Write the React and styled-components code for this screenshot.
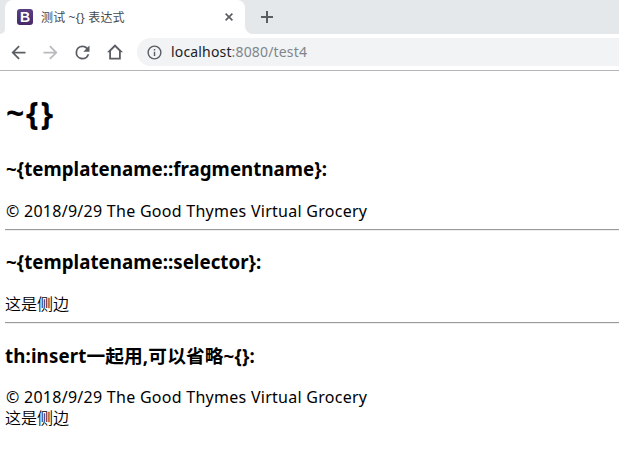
import React from "react";
import styled, { createGlobalStyle } from "styled-components";

const GlobalStyle = createGlobalStyle`
  * { box-sizing: border-box; }
  body {
    margin: 0;
    background: #fff;
    color: #000;
    overflow: hidden;
    font-family: "Noto Sans", "Noto Sans CJK SC", sans-serif;
  }
`;

const Window = styled.div`
  width: 619px;
  height: 455px;
  overflow: hidden;
  background: #fff;
`;

const TabStrip = styled.div`
  display: flex;
  height: 34px;
  background: #fff;
`;

const StripStart = styled.div`
  width: 5px;
  background: #e5e8eb;
  border-bottom-right-radius: 5px;
`;

const TabHolder = styled.div`
  width: 240px;
  background: linear-gradient(#e5e8eb 50%, #fff 50%);
`;

const Tab = styled.div`
  display: flex;
  align-items: center;
  height: 34px;
  padding-left: 12px;
  background: #fff;
  border-radius: 8px 8px 0 0;
`;

const StripRest = styled.div`
  flex: 1;
  padding: 11px 0 0 16px;
  background: #e5e8eb;
  border-bottom-left-radius: 8px;
`;

const TabTitle = styled.div`
  width: 184px;
  margin-left: 8px;
  padding-top: 1px;
  color: #45494d;
  font-size: 12px;
  line-height: 16px;
  letter-spacing: 0.15px;
  white-space: nowrap;
`;

const Icon = styled.svg`
  display: block;
  flex: none;
  width: ${(p) => p.$size}px;
  height: ${(p) => p.$size}px;
  fill: ${(p) => p.$color || "#5a5e63"};
`;

const Toolbar = styled.div`
  display: flex;
  align-items: center;
  height: 37px;
  padding-left: 3px;
  border-bottom: 1px solid #b4b5b7;
`;

const NavButton = styled.div`
  display: flex;
  justify-content: center;
  width: 32px;
  padding-right: ${(p) => (p.$nudge ? "1px" : "0")};
`;

const AddressBar = styled.div`
  display: flex;
  align-items: center;
  flex: 1;
  height: 28px;
  margin-left: 6px;
  padding-left: 9px;
  border-radius: 14px 0 0 14px;
  background: #f1f3f4;
`;

const Address = styled.div`
  margin-left: 8px;
  color: #202124;
  font-size: 14px;
  line-height: 20px;
  letter-spacing: 0.16px;
  white-space: nowrap;
`;

const Muted = styled.span`
  color: #80868b;
`;

const Page = styled.main`
  padding-left: 5px;
  padding-top: 21px;
`;

const Title = styled.h1`
  margin: 0 0 22px;
  padding-left: 1px;
  font-size: 32px;
  font-weight: 700;
  line-height: 42px;
  letter-spacing: 1.8px;
`;

const Heading = styled.h3`
  margin: 0 0 20px;
  padding-left: ${(p) => (p.$inset ? "1px" : "0")};
  padding-top: ${(p) => (p.$mixed ? "1px" : "0")};
  height: 25px;
  font-size: 18.7px;
  font-weight: 700;
  line-height: 25px;
  white-space: nowrap;
  letter-spacing: ${(p) => (p.$mixed ? "0.13px" : "0.04px")};
`;

const Line = styled.div`
  height: 21px;
  font-size: 16px;
  font-weight: 350;
  line-height: 21px;
  white-space: nowrap;
`;

const LatinLine = styled(Line)`
  padding-left: 1px;
  font-weight: 400;
  letter-spacing: 0.27px;
`;

const Rule = styled.hr`
  height: 2px;
  margin: 7px 0 18px;
  border: 0;
  border-top: 1px solid #9a9a9a;
  border-bottom: 1px solid #eee;
`;

const Notice = () => <LatinLine>© 2018/9/29 The Good Thymes Virtual Grocery</LatinLine>;
const Sidebar = () => <Line>这是侧边</Line>;

const Favicon = styled.div`
  width: 16px;
  height: 16px;
  border-radius: 3px;
  background: linear-gradient(#5b3f86, #452967);
  color: #fff;
  font: 700 14px/16px "Liberation Sans", sans-serif;
  text-align: center;
`;

export default function App() {
  return (
    <Window>
      <GlobalStyle />
      <TabStrip>
        <StripStart />
        <TabHolder>
          <Tab>
            <Favicon>B</Favicon>
            <TabTitle>测试 ~{"{}"} 表达式</TabTitle>
            <Icon $size={8} viewBox="0 0 8 8">
              <path d="M0.6 0.6L7.4 7.4M7.4 0.6L0.6 7.4" stroke="#5a5e63" strokeWidth="1.6" />
            </Icon>
          </Tab>
        </TabHolder>
        <StripRest>
          <Icon $size={12} viewBox="0 0 12 12">
            <path d="M5 0h2v5h5v2H7v5H5V7H0V5h5z" />
          </Icon>
        </StripRest>
      </TabStrip>
      <Toolbar>
        <NavButton $nudge>
          <Icon $size={21} viewBox="0 0 24 24">
            <path d="M20 11H7.83l5.59-5.59L12 4l-8 8 8 8 1.41-1.41L7.83 13H20v-2z" />
          </Icon>
        </NavButton>
        <NavButton $nudge>
          <Icon $size={21} $color="#b8babc" viewBox="0 0 24 24">
            <path d="M4 11h12.17l-5.59-5.59L12 4l8 8-8 8-1.41-1.41L16.17 13H4v-2z" />
          </Icon>
        </NavButton>
        <NavButton $nudge>
          <Icon $size={21} viewBox="0 0 24 24">
            <path d="M17.65 6.35A7.96 7.96 0 0 0 12 4a8 8 0 1 0 7.73 10h-2.08A6 6 0 1 1 12 6c1.66 0 3.14.69 4.22 1.78L13 11h7V4l-2.35 2.35z" />
          </Icon>
        </NavButton>
        <NavButton>
          <Icon $size={16} viewBox="0 0 16 16">
            <path d="M8 0.3L0 8.3h2.2V15.5h11.6V8.3H16zM8 3l4 3.9v6.8H4V6.9z" fillRule="evenodd" />
          </Icon>
        </NavButton>
        <AddressBar>
          <Icon $size={17} viewBox="0 0 24 24">
            <path d="M11 7h2v2h-2zm0 4h2v6h-2zm1-9a10 10 0 1 0 0 20 10 10 0 0 0 0-20zm0 18a8 8 0 1 1 0-16 8 8 0 0 1 0 16z" />
          </Icon>
          <Address>
            localhost<Muted>:8080/test4</Muted>
          </Address>
        </AddressBar>
      </Toolbar>
      <Page>
        <Title>~{"{}"}</Title>
        <Heading $inset>~{"{templatename::fragmentname}"}:</Heading>
        <Notice />
        <Rule />
        <Heading $inset>~{"{templatename::selector}"}:</Heading>
        <Sidebar />
        <Rule />
        <Heading $mixed>th:insert一起用,可以省略~{"{}"}:</Heading>
        <Notice />
        <Sidebar />
      </Page>
    </Window>
  );
}
